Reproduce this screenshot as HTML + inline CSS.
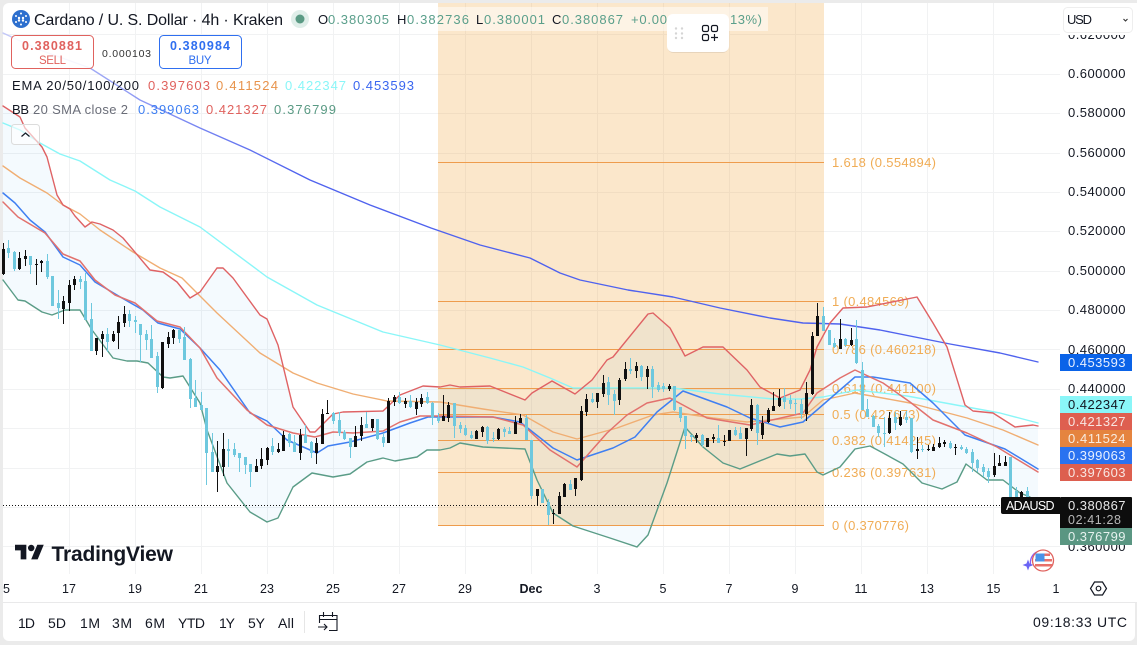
<!DOCTYPE html>
<html><head><meta charset="utf-8"><style>
html,body{margin:0;padding:0;background:#ebebeb;width:1137px;height:645px;overflow:hidden}
svg{display:block;font-family:"Liberation Sans",sans-serif}
text{white-space:pre}
</style></head><body>
<svg width="1137" height="645" viewBox="0 0 1137 645" xmlns="http://www.w3.org/2000/svg">
<defs>
<linearGradient id="g200" gradientUnits="userSpaceOnUse" x1="3" y1="0" x2="300" y2="0"><stop offset="0" stop-color="#c3c8f8"/><stop offset="1" stop-color="#4f62ee"/></linearGradient>
<clipPath id="ax"><rect x="1060" y="35" width="77" height="540"/></clipPath>
</defs>
<rect width="1137" height="645" fill="#ebebeb"/>
<rect x="3" y="3" width="1132" height="638" rx="6" fill="#fff"/>
<rect x="1100" y="3" width="37" height="600" fill="#fff"/>
<!-- grid -->
<path d="M3 34.500H1060M3 74.500H1060M3 113.500H1060M3 153.500H1060M3 192.500H1060M3 231.500H1060M3 271.500H1060M3 310.500H1060M3 349.500H1060M3 389.500H1060M3 428.500H1060M3 468.500H1060M3 507.500H1060M3 546.500H1060M69.500 3V574M135.500 3V574M201.500 3V574M267.500 3V574M333.500 3V574M399.500 3V574M465.500 3V574M531.500 3V574M597.500 3V574M663.500 3V574M729.500 3V574M795.500 3V574M861.500 3V574M927.500 3V574M993.500 3V574" stroke="#f1f2f3" fill="none"/>
<!-- fib zone -->
<rect x="438" y="3" width="386" height="523" fill="rgba(240,170,70,.28)"/>
<!-- BB band -->
<path fill="rgba(33,150,243,.05)" d="M3 106L20 117 25 128 42 147 47 157 57 195 63 205 70 209 75 216 85 227 92 222 100 224 113 230 123 238 150 270 163 272 177 282 190 298 200 292 217 268 223 268 233 278 260 315 267 319 278 345 293 407 310 432 315 432 333 414 343 412 383 411 400 395 423 386 440 387 450 385 460 387 490 386 525 400 532 393 552 381 575 394 592 380 607 360 613 357 648 314 653 313 670 328 685 356 703 347 723 347 747 370 760 387 780 398 800 390 810 370 817 347 830 323 843 308 867 307 917 297 933 323 947 347 965 405 973 411 993 413 1015 427 1033 425 1038 426V500L1030 497 1020 493 1003 480 987 480 966 464 957 482 942 489 922 483 903 464 883 453 870 446 855 449 840 467 823 475 817 472 805 454 790 456 777 454 740 469 723 463 703 447 685 427 667 483 648 535 637 547 610 538 573 526 553 513 537 480 525 449 483 447 460 443 450 448 440 450 427 450 417 457 395 461 383 458 367 462 350 474 333 477 312 473 293 487 278 518 267 522 250 512 227 483 207 430 200 403 183 376 170 378 163 377 148 363 137 361 127 361 113 358 92 330 80 310 65 310 52 315 42 312 25 301 18 300 3 280Z"/>
<!-- fib lines -->
<path d="M438 162.500H824M438 301.500H824M438 349.500H824M438 388.500H824M438 414.500H824M438 440.500H824M438 472.500H824M438 525.500H824" stroke="#ee9c4c" fill="none"/>
<g font-size="13" fill="#f0ac55">
<text x="832" y="167" textLength="104">1.618 (0.554894)</text>
<text x="832" y="306" textLength="77">1 (0.484569)</text>
<text x="832" y="354" textLength="104">0.786 (0.460218)</text>
<text x="832" y="393" textLength="104">0.618 (0.441100)</text>
<text x="832" y="419" textLength="88">0.5 (0.427673)</text>
<text x="832" y="445" textLength="104">0.382 (0.414245)</text>
<text x="832" y="477" textLength="104">0.236 (0.397631)</text>
<text x="832" y="530" textLength="77">0 (0.370776)</text>
</g>
<!-- price dotted line -->
<path d="M3 505.500H1002" stroke="#111" stroke-dasharray="1 2" fill="none"/>
<!-- lines -->
<g fill="none" stroke-linejoin="round" stroke-linecap="round" stroke-width="1.400">
<polyline stroke="url(#g200)" points="3,33 40,50 90,68 140,100 200,128 250,150 310,180 370,205 431,228 480,245 530,258 560,273 580,280 628,290 673,297 720,308 770,318 803,323 840,324 880,330 950,344 1000,353 1038,362"/>
<polyline stroke="#8af6f8" points="3,123 20,130 40,143 60,154 80,161 110,180 135,191 160,207 200,227 267,277 317,305 383,332 440,345 490,358 523,367 550,378 573,388 620,388 673,388 720,394 773,399 800,399 823,397 857,390 907,396 967,407 1000,413 1038,423"/>
<polyline stroke="#f0ae73" points="3,166 20,178 47,193 63,205 80,214 100,230 133,252 160,268 182,278 217,313 260,353 293,373 317,383 353,394 387,401 440,402 483,409 523,415 553,432 577,439 617,428 653,415 673,412 713,418 747,422 803,417 823,400 855,393 910,403 967,418 1003,430 1038,445"/>
<polyline stroke="#3f7ff2" stroke-width="1.500" points="3,193 15,203 30,220 45,232 63,257 80,265 95,282 122,298 143,310 158,323 180,329 200,348 220,370 250,413 267,421 287,440 317,453 328,446 350,442 383,433 410,423 428,417 440,417 493,417 520,422 553,448 577,460 613,448 635,437 657,412 683,391 727,407 750,418 780,427 803,422 817,410 840,390 855,377 873,377 910,383 933,403 965,435 1005,449 1038,469"/>
<polyline stroke="#e2716d" stroke-width="1.500" points="3,202 18,217 45,233 63,254 80,261 95,280 115,295 135,303 157,321 180,327 200,348 217,378 247,410 267,425 293,433 315,437 333,432 353,433 383,431 400,422 420,416 440,416 493,417 523,425 550,450 577,467 607,433 627,415 647,403 670,398 707,418 750,425 803,413 817,393 840,378 855,370 883,383 910,402 933,420 967,433 997,447 1038,472"/>
<polyline stroke="#df6264" points="3,106 20,117 25,128 42,147 47,157 57,195 63,205 70,209 75,216 85,227 92,222 100,224 113,230 123,238 150,270 163,272 177,282 190,298 200,292 217,268 223,268 233,278 260,315 267,319 278,345 293,407 310,432 315,432 333,414 343,412 383,411 400,395 423,386 440,387 450,385 460,387 490,386 525,400 532,393 552,381 575,394 592,380 607,360 613,357 648,314 653,313 670,328 685,356 703,347 723,347 747,370 760,387 780,398 800,390 810,370 817,347 830,323 843,308 867,307 917,297 933,323 947,347 965,405 973,411 993,413 1015,427 1033,425 1038,426"/>
<polyline stroke="#5a9c87" points="3,280 18,300 25,301 42,312 52,315 65,310 80,310 92,330 113,358 127,361 137,361 148,363 163,377 170,378 183,376 200,403 207,430 227,483 250,512 267,522 278,518 293,487 312,473 333,477 350,474 367,462 383,458 395,461 417,457 427,450 440,450 450,448 460,443 483,447 525,449 537,480 553,513 573,526 610,538 637,547 648,535 667,483 685,427 703,447 723,463 740,469 777,454 790,456 805,454 817,472 823,475 840,467 855,449 870,446 883,453 903,464 922,483 942,489 957,482 966,464 987,480 1003,480 1020,493 1030,497"/>
</g>
<!-- cyan wicks -->
<path fill="none" stroke="#6ec8de" d="M8.500 240V258M14.500 251V271M30.500 256V274M47.500 254V279M52.500 276V306M58.500 290V319M80.500 276V289M85.500 273V320M91.500 303V351M107.500 328V352M129.500 310V327M135.500 316V333M140.500 324V362M146.500 330V350M151.500 325V358M157.500 352V393M179.500 329V343M184.500 327V360M190.500 358V408M195.500 380V407M201.500 392V410M206.500 408V485M212.500 433V472M228.500 439V467M234.500 443V457M239.500 453V472M245.500 457V474M250.500 464V487M272.500 438V455M289.500 433V447M294.500 435V452M305.500 425V443M311.500 441V458M333.500 412V424M339.500 412V436M344.500 430V440M350.500 438V458M366.500 412V428M377.500 419V440M383.500 433V447M399.500 392V404M410.500 395V408M427.500 392V404M432.500 402V425M438.500 413V423M454.500 403V438M460.500 422V433M465.500 425V436M471.500 431V439M487.500 426V444M493.500 432V442M504.500 427V437M509.500 427V434M526.500 415V440M531.500 440V499M542.500 489V503M548.500 499V525M570.500 480V490M592.500 393V403M608.500 377V405M614.500 390V415M630.500 358V374M641.500 365V381M652.500 366V398M658.500 382V392M663.500 383V392M674.500 386V411M680.500 407V422M685.500 416V449M691.500 435V442M702.500 434V447M718.500 425V443M735.500 427V436M740.500 427V439M757.500 404V445M784.500 388V409M790.500 395V409M795.500 399V414M801.500 399V419M823.500 307V331M829.500 330V345M834.500 338V348M845.500 338V347M856.500 320V364M862.500 362V410M867.500 399V417M873.500 415V427M878.500 424V437M884.500 417V447M895.500 412V430M906.500 411V423M911.500 418V453M922.500 445V452M950.500 441V449M961.500 445V450M966.500 447V454M972.500 449V472M977.500 459V472M983.500 464V477M988.500 468V483M1010.500 457V497M1016.500 487V498M1027.500 487V498"/>
<!-- cyan bodies -->
<path fill="none" stroke="#6ec8de" stroke-width="3" d="M8.500 248V253M14.500 252V269M30.500 256V265M47.500 261V277M52.500 276V306M58.500 303V308M80.500 279V282M85.500 281V320M91.500 319V351M107.500 334V342M129.500 314V321M135.500 320V322M140.500 324V335M146.500 334V340M151.500 339V358M157.500 356V387M179.500 330V339M184.500 337V360M190.500 359V399M195.500 398V407M201.500 405V410M206.500 408V453M212.500 452V472M228.500 449V451M234.500 449V455M239.500 453V458M245.500 457V465M250.500 464V472M272.500 446V452M289.500 434V443M294.500 442V452M305.500 435V443M311.500 442V453M333.500 413V421M339.500 420V433M344.500 432V439M350.500 438V447M366.500 424V428M377.500 419V439M383.500 437V443M399.500 397V403M410.500 401V407M427.500 397V403M432.500 403V418M438.500 418V421M454.500 403V426M460.500 425V429M465.500 428V435M471.500 435V438M487.500 427V441M493.500 438V439M504.500 429V432M509.500 431V434M526.500 418V440M531.500 440V496M542.500 489V503M548.500 502V515M570.500 484V490M592.500 399V402M608.500 382V395M614.500 394V401M630.500 369V371M641.500 366V377M652.500 369V387M658.500 385V390M663.500 386V389M674.500 386V410M680.500 407V418M685.500 416V436M691.500 435V437M702.500 435V445M718.500 438V443M735.500 430V435M740.500 433V439M757.500 405V433M784.500 397V402M790.500 400V404M795.500 403V404M801.500 404V414M823.500 316V331M829.500 330V345M834.500 343V347M845.500 339V345M856.500 339V363M862.500 370V410M867.500 409V417M873.500 416V427M878.500 426V433M884.500 433V434M895.500 417V423M906.500 417V420M911.500 418V452M922.500 449V450M950.500 443V448M961.500 447V449M966.500 449V453M972.500 452V463M977.500 460V468M983.500 467V472M988.500 471V477M1010.500 457V497M1016.500 491V498M1027.500 491V498"/>
<!-- black wicks -->
<path fill="none" stroke="#101010" d="M3.500 243V275M19.500 252V270M25.500 250V266M36.500 259V285M41.500 260V272M63.500 296V324M69.500 280V311M74.500 276V290M96.500 338V355M102.500 331V357M113.500 331V342M118.500 316V349M124.500 306V327M162.500 342V389M168.500 332V348M173.500 329V344M217.500 441V492M223.500 433V476M256.500 459V472M261.500 448V469M267.500 447V465M278.500 443V453M283.500 431V451M300.500 429V460M316.500 438V464M322.500 409V444M327.500 400V414M355.500 426V447M361.500 417V441M372.500 419V431M388.500 398V443M394.500 395V406M405.500 398V408M416.500 398V415M421.500 394V407M443.500 395V421M448.500 402V422M476.500 430V439M482.500 426V437M498.500 428V440M515.500 416V434M520.500 414V423M537.500 489V505M553.500 509V524M559.500 492V514M564.500 483V497M575.500 478V496M581.500 406V481M586.500 394V416M597.500 393V408M603.500 375V397M619.500 378V405M625.500 362V381M636.500 362V378M647.500 366V389M669.500 384V391M696.500 433V443M707.500 438V447M713.500 434V443M724.500 435V446M729.500 430V441M746.500 428V456M751.500 399V431M762.500 416V439M768.500 408V423M773.500 392V411M779.500 389V407M806.500 382V421M812.500 332V395M817.500 303V336M840.500 319V349M851.500 328V346M889.500 412V434M900.500 411V426M917.500 437V459M928.500 445V451M933.500 444V451M939.500 437V448M944.500 440V447M955.500 444V455M994.500 453V477M999.500 455V466M1005.500 456V466M1021.500 491V498"/>
<!-- black bodies -->
<path fill="none" stroke="#101010" stroke-width="3" d="M3.500 249V274M19.500 258V269M25.500 256V259M36.500 264V265M41.500 261V263M63.500 301V309M69.500 285V303M74.500 279V285M96.500 338V351M102.500 334V339M113.500 334V341M118.500 322V333M124.500 314V323M162.500 342V388M168.500 337V344M173.500 330V338M217.500 466V472M223.500 449V467M256.500 466V472M261.500 459V466M267.500 448V460M278.500 449V452M283.500 435V451M300.500 435V453M316.500 443V453M322.500 414V444M327.500 413V414M355.500 436V447M361.500 425V436M372.500 419V428M388.500 401V443M394.500 397V402M405.500 401V404M416.500 402V409M421.500 398V404M443.500 416V421M448.500 405V418M476.500 431V439M482.500 427V432M498.500 429V439M515.500 422V434M520.500 418V423M537.500 489V496M553.500 513V514M559.500 496V514M564.500 484V497M575.500 478V489M581.500 411V480M586.500 399V412M597.500 393V402M603.500 383V394M619.500 380V400M625.500 369V379M636.500 366V371M647.500 369V377M669.500 386V389M696.500 435V438M707.500 438V447M713.500 437V439M724.500 441V442M729.500 430V441M746.500 428V439M751.500 405V429M762.500 423V435M768.500 410V422M773.500 406V411M779.500 398V406M806.500 393V414M812.500 336V394M817.500 316V336M840.500 339V349M851.500 340V345M889.500 418V433M900.500 417V425M917.500 449V451M928.500 449V450M933.500 447V451M939.500 443V447M944.500 442V444M955.500 447V448M994.500 466V475M999.500 463V466M1005.500 462V466M1021.500 492V498"/>
<!-- legend -->
<circle cx="21" cy="19" r="9" fill="#2d6fce"/>
<g fill="#fff"><circle cx="21" cy="13.500" r="1"/><circle cx="21" cy="24.500" r="1"/><circle cx="16" cy="16" r="1"/><circle cx="26" cy="16" r="1"/><circle cx="16" cy="22" r="1"/><circle cx="26" cy="22" r="1"/><circle cx="19" cy="18" r="1.200"/><circle cx="23" cy="18" r="1.200"/><circle cx="19" cy="20.500" r="1.200"/><circle cx="23" cy="20.500" r="1.200"/></g>
<text x="34" y="25" font-size="16" fill="#131722" textLength="249">Cardano / U. S. Dollar · 4h · Kraken</text>
<circle cx="300" cy="19" r="9" fill="#dfeee9"/><circle cx="300" cy="19" r="4.500" fill="#5a9a84"/>
<rect x="438" y="7" width="330" height="24" fill="rgba(255,255,255,.5)"/>
<g font-size="13">
<text x="318" y="24" fill="#131722" textLength="9">O</text><text x="328" y="24" fill="#5a9f8b" textLength="61">0.380305</text>
<text x="397" y="24" fill="#131722" textLength="9">H</text><text x="407" y="24" fill="#5a9f8b" textLength="62">0.382736</text>
<text x="476" y="24" fill="#131722" textLength="7">L</text><text x="484" y="24" fill="#5a9f8b" textLength="61">0.380001</text>
<text x="552" y="24" fill="#131722" textLength="9">C</text><text x="562" y="24" fill="#5a9f8b" textLength="61">0.380867</text>
<text x="631" y="24" fill="#5a9f8b" textLength="36">+0.00</text><text x="730" y="24" fill="#5a9f8b" textLength="32">13%)</text>
</g>
<rect x="667.500" y="14.500" width="61" height="37" rx="6" fill="#000" opacity=".08" transform="translate(0 1.500)"/>
<rect x="667" y="14" width="62" height="38" rx="6" fill="#fff"/>
<g fill="#d5d5d5"><circle cx="676" cy="28.500" r="1.200"/><circle cx="682" cy="28.500" r="1.200"/><circle cx="676" cy="33.500" r="1.200"/><circle cx="682" cy="33.500" r="1.200"/><circle cx="676" cy="38" r="1.200"/><circle cx="682" cy="38" r="1.200"/></g>
<g fill="none" stroke="#131722" stroke-width="1.200"><rect x="702.500" y="25.500" width="6" height="6" rx="1.500"/><rect x="711.500" y="25.500" width="6" height="6" rx="1.500"/><rect x="702.500" y="34.500" width="6" height="6" rx="1.500"/><path d="M711 37.500H718M714.500 34V41"/></g>
<!-- sell / buy -->
<rect x="11.500" y="35.500" width="82" height="33" rx="4" fill="#fff" fill-opacity=".9" stroke="#e0625e"/>
<text x="22" y="50" font-size="12.500" font-weight="bold" fill="#e0625e" textLength="60">0.380881</text>
<text x="39" y="64" font-size="11.500" fill="#e0625e" textLength="27">SELL</text>
<text x="102" y="57" font-size="10.500" fill="#333" textLength="49">0.000103</text>
<rect x="159.500" y="35.500" width="82" height="33" rx="4" fill="#fff" fill-opacity=".9" stroke="#2f6ff0"/>
<text x="170" y="50" font-size="12.500" font-weight="bold" fill="#2f6ff0" textLength="60">0.380984</text>
<text x="188.500" y="64" font-size="11.500" fill="#2f6ff0" textLength="23">BUY</text>
<g font-size="13">
<text x="12" y="90" fill="#131722" textLength="127">EMA 20/50/100/200</text>
<text x="148" y="90" fill="#e0625e" textLength="62">0.397603</text>
<text x="216" y="90" fill="#e8934c" textLength="62">0.411524</text>
<text x="285" y="90" fill="#8af6f8" textLength="61">0.422347</text>
<text x="353" y="90" fill="#3a66f0" textLength="61">0.453593</text>
<text x="12" y="114" fill="#131722" textLength="17">BB</text>
<text x="33" y="114" fill="#6a6d78" textLength="95">20 SMA close 2</text>
<text x="138" y="114" fill="#3f7ff2" textLength="61">0.399063</text>
<text x="206" y="114" fill="#e0625e" textLength="61">0.421327</text>
<text x="274" y="114" fill="#5a9a84" textLength="62">0.376799</text>
</g>
<rect x="11.500" y="124.500" width="28" height="20" rx="3" fill="#fff" fill-opacity=".6" stroke="#dcdcdc"/>
<path d="M21.500 136.500L25.500 133 29.500 136.500" fill="none" stroke="#131722" stroke-width="1.200"/>
<!-- TV logo -->
<g transform="translate(15 541.500) scale(.81)" fill="#131722"><path d="M14 22H7V11H0V4h14v18zM28 22h-8l7.500-18h8L28 22z"/><circle cx="20" cy="8" r="4"/></g>
<text x="51.500" y="561" font-size="21" font-weight="bold" fill="#131722" textLength="121.500">TradingView</text>
<!-- flag -->
<path d="M1038 551.500A11.500 11.500 0 0 0 1031 566" fill="none" stroke="#8b5cf6" stroke-width="1.300"/>
<path d="M1028 559.500L1029.500 563.500 1033.500 565 1029.500 566.500 1028 570.500 1026.500 566.500 1022.500 565 1026.500 563.500Z" fill="#6a64f5"/>
<circle cx="1043" cy="560.500" r="10.500" fill="#fff" stroke="#e0625e" stroke-width="1.300"/>
<path d="M1036 553.500H1050V556H1036ZM1035 559H1052V561.500H1035ZM1035 564H1052V566.500H1035Z" fill="#e8706a"/>
<rect x="1035.500" y="553.500" width="9" height="8" fill="#4a93e8"/>
<!-- axis areas -->
<rect x="1060" y="3" width="77" height="572" fill="#fff"/>
<rect x="3" y="574" width="1132" height="28" fill="#fff"/>
<rect x="1100" y="574" width="37" height="28" fill="#fff"/>
<g font-size="13" fill="#131722" clip-path="url(#ax)">
<text x="1068" y="39" textLength="57.500">0.620000</text>
<text x="1068" y="78" textLength="57.500">0.600000</text>
<text x="1068" y="117" textLength="57.500">0.580000</text>
<text x="1068" y="157" textLength="57.500">0.560000</text>
<text x="1068" y="196" textLength="57.500">0.540000</text>
<text x="1068" y="235" textLength="57.500">0.520000</text>
<text x="1068" y="275" textLength="57.500">0.500000</text>
<text x="1068" y="314" textLength="57.500">0.480000</text>
<text x="1068" y="354" textLength="57.500">0.460000</text>
<text x="1068" y="393" textLength="57.500">0.440000</text>
<text x="1068" y="551" textLength="57.500">0.360000</text>
</g>
<rect x="1060" y="354" width="72" height="17" fill="#0a63e8"/>
<rect x="1060" y="396" width="72" height="17" fill="#8af6f8"/>
<rect x="1060" y="413" width="72" height="17" fill="#de5f50"/>
<rect x="1060" y="430" width="72" height="17" fill="#e5843f"/>
<rect x="1060" y="447" width="72" height="17" fill="#2a72f0"/>
<rect x="1060" y="464" width="72" height="17" fill="#dd5f4f"/>
<path d="M1003 497H1060V514H1003A2 2 0 0 1 1001 512V499A2 2 0 0 1 1003 497Z" fill="#0d0d0d"/>
<rect x="1060" y="497" width="72" height="32" rx="1" fill="#0d0d0d"/>
<rect x="1060" y="528" width="72" height="17" fill="#5a9682"/>
<g font-size="13" fill="#fff">
<text x="1068" y="367" textLength="57.500" fill="#e8f0ff">0.453593</text>
<text x="1068" y="409" textLength="57.500" fill="#131722">0.422347</text>
<text x="1068" y="426" textLength="57.500" fill="#f8e6e2">0.421327</text>
<text x="1068" y="443" textLength="57.500" fill="#f8ece0">0.411524</text>
<text x="1068" y="460" textLength="57.500" fill="#e8f0ff">0.399063</text>
<text x="1068" y="477" textLength="57.500" fill="#f8e6e2">0.397603</text>
<text x="1006" y="510" textLength="48.500" font-size="12.500">ADAUSD</text>
<text x="1068" y="510" textLength="57.500" fill="#e8e8e8">0.380867</text>
<text x="1068" y="524" textLength="53" font-size="12.500" fill="#b8b8b8">02:41:28</text>
<text x="1068" y="541" textLength="57.500" fill="#e6f2ee">0.376799</text>
</g>
<!-- USD -->
<rect x="1063.500" y="7.500" width="69" height="25" rx="4" fill="#fff" stroke="#eeeeee"/>
<text x="1067" y="24" font-size="13" fill="#131722" textLength="25">USD</text>
<path d="M1123.500 19L1125.500 21 1127.500 19" fill="none" stroke="#333" stroke-width="1.100"/>
<!-- time axis -->
<g font-size="12.500" fill="#131722" text-anchor="middle">
<text x="6.500" y="593">5</text><text x="69" y="593">17</text><text x="135" y="593">19</text><text x="201" y="593">21</text><text x="267" y="593">23</text><text x="333" y="593">25</text><text x="399" y="593">27</text><text x="465" y="593">29</text><text x="531" y="593" font-weight="bold">Dec</text><text x="597" y="593">3</text><text x="663" y="593">5</text><text x="729" y="593">7</text><text x="795" y="593">9</text><text x="861" y="593">11</text><text x="927" y="593">13</text><text x="993.500" y="593">15</text><text x="1056" y="593">1</text>
</g>
<path d="M1094.500 582H1102.500L1106.500 588.500 1102.500 595H1094.500L1090.500 588.500Z" fill="none" stroke="#131722" stroke-width="1.200"/>
<circle cx="1098.500" cy="588.500" r="2.300" fill="none" stroke="#131722" stroke-width="1.200"/>
<path d="M3 602.500H1137" stroke="#e9e9ea"/>
<!-- toolbar -->
<g font-size="14" fill="#131722">
<text x="18" y="628" textLength="17">1D</text>
<text x="48" y="628" textLength="18">5D</text>
<text x="80" y="628" textLength="20">1M</text>
<text x="112" y="628" textLength="20">3M</text>
<text x="145" y="628" textLength="20">6M</text>
<text x="178" y="628" textLength="27">YTD</text>
<text x="219" y="628" textLength="16">1Y</text>
<text x="248" y="628" textLength="17">5Y</text>
<text x="278" y="628" textLength="16">All</text>
<text x="1033" y="627" textLength="94">09:18:33 UTC</text>
</g>
<path d="M304.500 611V633" stroke="#e6e6e6"/>
<path d="M319.500 623V615.500H337V630.500H329M319.500 619.500H337M323.500 612V617M332.500 612V617M318 627H327M324 624L327 627 324 630" fill="none" stroke="#131722" stroke-width="1.100"/>
</svg>
</body></html>
